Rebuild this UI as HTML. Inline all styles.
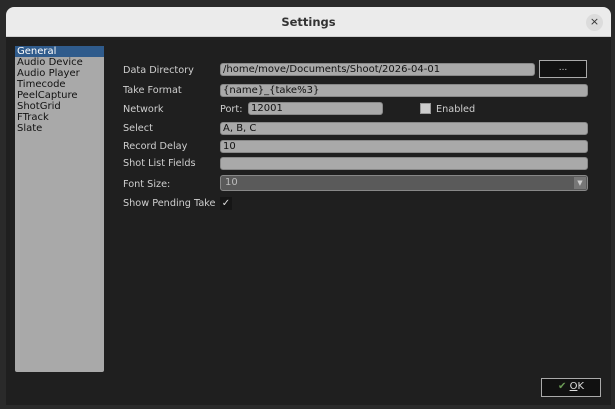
<!DOCTYPE html>
<html><head><style>
*{margin:0;padding:0;box-sizing:border-box}
body{width:615px;height:409px;background:#2a2a2a;position:relative;overflow:hidden;font-family:"DejaVu Sans","Liberation Sans",sans-serif;font-size:10px}
.a{position:absolute}
.dlg{left:6px;top:7px;width:605px;height:398px;background:#1f1f1f;border-radius:8px 8px 0 0;overflow:hidden}
.title{left:0;top:0;width:605px;height:30px;background:#ebebeb;border-bottom:1px solid #cfcfcf;text-align:center;line-height:31px;font-weight:bold;font-size:11.5px;color:#333}
.lbl{color:#cfcfcf;font-size:9.7px;left:117px}
.fld{background:#a9a9a9;border:1px solid #888;border-radius:3px;height:13px;color:#111;font-size:10px;line-height:11px;padding-left:2px}
.list{left:9px;top:39px;width:89px;height:326px;background:#a9a9a9;border-radius:2px}
.list div{height:11px;line-height:11px;font-size:10px;color:#111;padding-left:2px}
</style></head><body>
<div class="a dlg">
 <div class="a title">Settings</div>
 <div class="a" style="left:580px;top:7px;width:17px;height:17px;border-radius:50%;background:#dcdcdc;text-align:center;line-height:16px;font-size:11px;color:#333">×</div>
 <div class="a list">
  <div style="background:#2f5b8c;color:#fff">General</div>
  <div>Audio Device</div><div>Audio Player</div><div>Timecode</div><div>PeelCapture</div><div>ShotGrid</div><div>FTrack</div><div>Slate</div>
 </div>
 <div class="a lbl" style="top:58px">Data Directory</div>
 <div class="a fld" style="left:214px;top:56px;width:315px">/home/move/Documents/Shoot/2026-04-01</div>
 <div class="a" style="left:533px;top:53px;width:48px;height:18px;background:#111;border:1px solid #aaa;color:#ccc;text-align:center;line-height:14px;font-size:9px">...</div>
 <div class="a lbl" style="top:78px">Take Format</div>
 <div class="a fld" style="left:214px;top:77px;width:368px">{name}_{take%3}</div>
 <div class="a lbl" style="top:97px">Network</div>
 <div class="a lbl" style="left:214px;top:97px">Port:</div>
 <div class="a fld" style="left:242px;top:95px;width:135px">12001</div>
 <div class="a" style="left:414px;top:96px;width:11px;height:11px;background:#ccc;border:1px solid #999"></div>
 <div class="a lbl" style="left:430px;top:97px">Enabled</div>
 <div class="a lbl" style="top:116px">Select</div>
 <div class="a fld" style="left:214px;top:115px;width:368px">A, B, C</div>
 <div class="a lbl" style="top:134px">Record Delay</div>
 <div class="a fld" style="left:214px;top:133px;width:368px">10</div>
 <div class="a lbl" style="top:151px">Shot List Fields</div>
 <div class="a fld" style="left:214px;top:150px;width:368px"></div>
 <div class="a lbl" style="top:172px">Font Size:</div>
 <div class="a fld" style="left:214px;top:168px;width:368px;height:16px;background:#5a5a5a;color:#bbb;line-height:14px;padding-left:4px">10</div>
 <div class="a" style="left:568px;top:170px;width:12px;height:12px;background:#777;color:#ccc;font-size:7px;text-align:center;line-height:12px">▼</div>
 <div class="a lbl" style="top:191px">Show Pending Take</div>
 <div class="a" style="left:214px;top:190px;width:12px;height:13px;background:#161616;color:#ddd;font-size:10px;text-align:center;line-height:13px">✓</div>
 <div class="a" style="left:535px;top:371px;width:60px;height:19px;background:#111;border:1px solid #aaa;color:#ddd;font-size:10px;line-height:16px;text-align:center"><span style="color:#6a9a55">✔</span> <u>O</u>K</div>
</div>
</body></html>
